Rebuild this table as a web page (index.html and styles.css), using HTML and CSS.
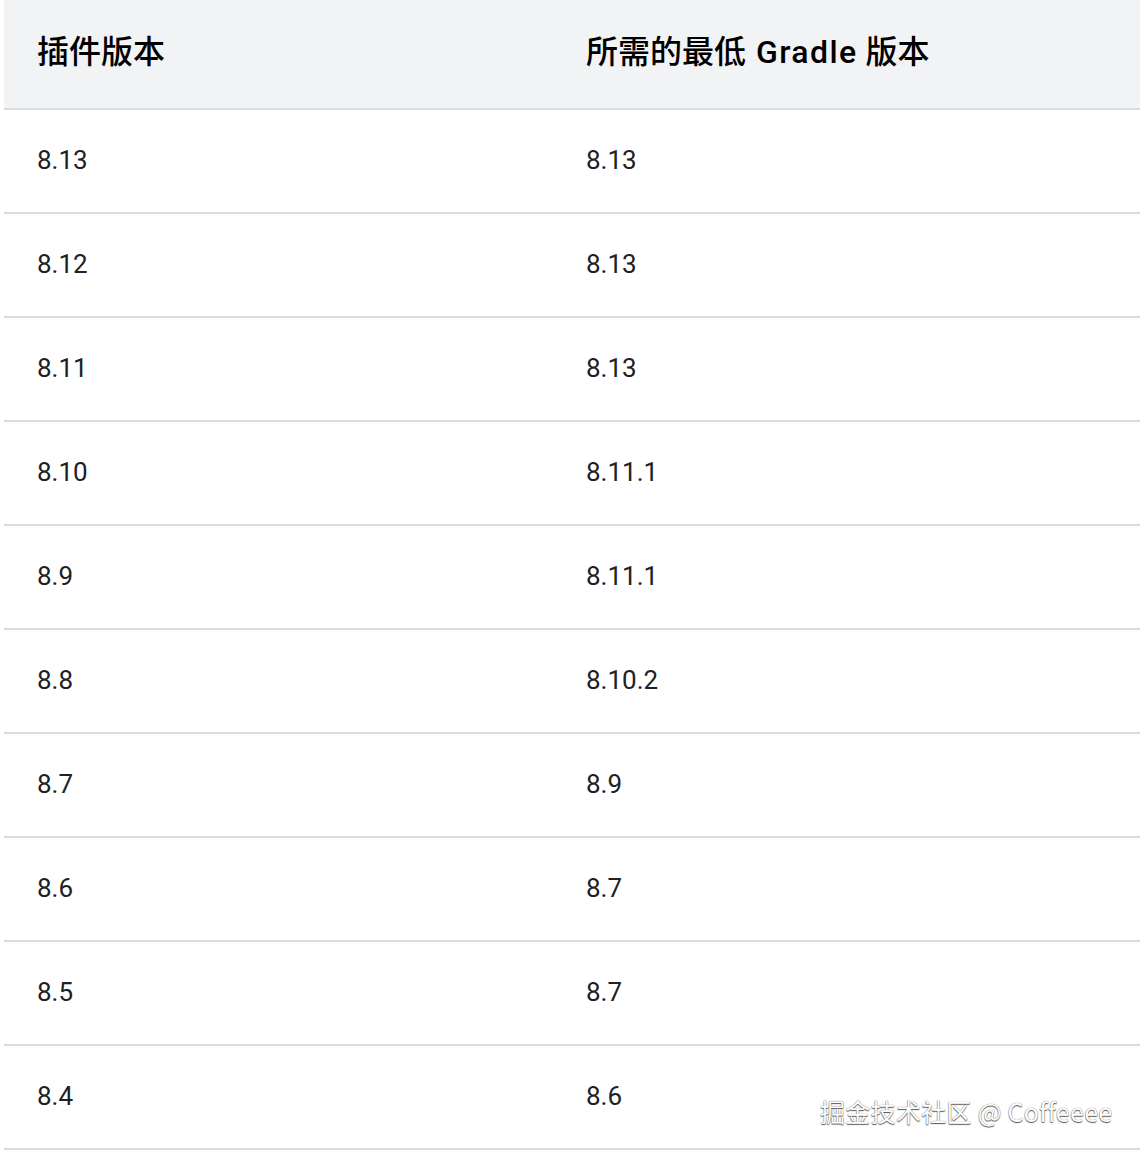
FILE: index.html
```html
<!DOCTYPE html>
<html lang="zh-CN">
<head>
<meta charset="utf-8">
<link rel="stylesheet" href="styles.css">
</head>
<body>
<div class="page">
  <div class="table">
    <div class="row head">
      <div class="cell">插件版本</div>
      <div class="cell">所需的最低 <span class="latin">Gradle</span> 版本</div>
    </div>
    <div class="row"><div class="cell">8.13</div><div class="cell">8.13</div></div>
    <div class="row"><div class="cell">8.12</div><div class="cell">8.13</div></div>
    <div class="row"><div class="cell">8.11</div><div class="cell">8.13</div></div>
    <div class="row"><div class="cell">8.10</div><div class="cell">8.11.1</div></div>
    <div class="row"><div class="cell">8.9</div><div class="cell">8.11.1</div></div>
    <div class="row"><div class="cell">8.8</div><div class="cell">8.10.2</div></div>
    <div class="row"><div class="cell">8.7</div><div class="cell">8.9</div></div>
    <div class="row"><div class="cell">8.6</div><div class="cell">8.7</div></div>
    <div class="row"><div class="cell">8.5</div><div class="cell">8.7</div></div>
    <div class="row"><div class="cell">8.4</div><div class="cell">8.6</div></div>
  </div>
  <div class="watermark">掘金技术社区 @ Coffeeee</div>
</div>
</body>
</html>
```
FILE: styles.css
```css
html, body {
  margin: 0;
  padding: 0;
  background: #ffffff;
}
.page {
  position: relative;
  width: 1140px;
  height: 1156px;
  overflow: hidden;
}
.table {
  margin-left: 4px;
  width: 1136px;
  font-family: Roboto, "Noto Sans CJK SC", sans-serif;
  color: #202124;
}
.row {
  display: grid;
  grid-template-columns: 549px 1fr;
  align-items: center;
  border-bottom: 2px solid #dadce0;
  font-size: 26px;
  padding-bottom: 2px;
  box-sizing: border-box;
  height: 104px;
}
.row.head {
  height: 110px;
  padding-bottom: 10px;
  background: #f1f3f4;
  font-size: 32px;
  font-weight: 500;
  color: #000000;
}
.latin {
  letter-spacing: 1.4px;
  padding-left: 2px;
}
.cell {
  padding-left: 33px;
}
.watermark {
  position: absolute;
  left: 820px;
  top: 1093px;
  font-family: "Noto Sans CJK SC", sans-serif;
  font-size: 25px;
  letter-spacing: 0.3px;
  color: #ffffff;
  text-shadow: 0 1px 1px #555, 0 0 1px #555;
}
```
